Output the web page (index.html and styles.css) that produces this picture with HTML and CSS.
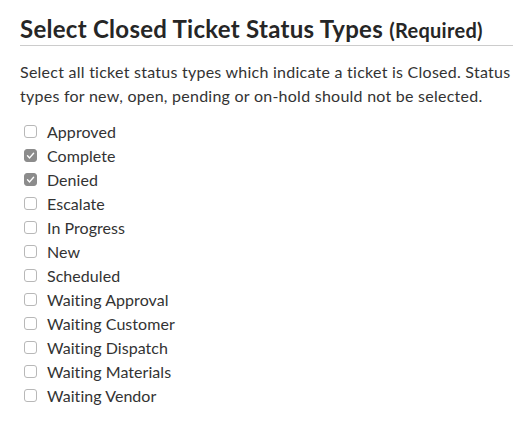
FILE: index.html
```html
<!DOCTYPE html>
<html>
<head>
<meta charset="utf-8">
<link rel="stylesheet" href="styles.css">
</head>
<body>
<div class="panel">
  <h2 class="title">Select Closed Ticket Status Types <span class="req">(Required)</span></h2>
  <p class="desc">Select all ticket status types which indicate a ticket is Closed. Status types for new, open, pending or on-hold should not be selected.</p>
  <ul class="list">
    <li class="item"><span class="box"></span>Approved</li>
    <li class="item"><span class="box checked"><svg viewBox="0 0 13 13" width="13" height="13"><path d="M3.5 6.8 L5.6 8.9 L9.6 4.2" fill="none" stroke="#fff" stroke-width="1.4" stroke-linecap="round" stroke-linejoin="round"/></svg></span>Complete</li>
    <li class="item"><span class="box checked"><svg viewBox="0 0 13 13" width="13" height="13"><path d="M3.5 6.8 L5.6 8.9 L9.6 4.2" fill="none" stroke="#fff" stroke-width="1.4" stroke-linecap="round" stroke-linejoin="round"/></svg></span>Denied</li>
    <li class="item"><span class="box"></span>Escalate</li>
    <li class="item"><span class="box"></span>In Progress</li>
    <li class="item"><span class="box"></span>New</li>
    <li class="item"><span class="box"></span>Scheduled</li>
    <li class="item"><span class="box"></span>Waiting Approval</li>
    <li class="item"><span class="box"></span>Waiting Customer</li>
    <li class="item"><span class="box"></span>Waiting Dispatch</li>
    <li class="item"><span class="box"></span>Waiting Materials</li>
    <li class="item"><span class="box"></span>Waiting Vendor</li>
  </ul>
</div>
</body>
</html>
```
FILE: styles.css
```css
html, body {
  margin: 0;
  padding: 0;
  background: #fff;
}
body {
  font-family: Lato, "Open Sans", sans-serif;
  color: #333;
}
.panel {
  padding: 14px 0 0 20px;
}
.title {
  margin: 0;
  font-size: 24px;
  font-weight: 700;
  color: #262626;
  line-height: 30px;
  letter-spacing: 0.27px;
  border-bottom: 1px solid #ccc;
}
.req {
  font-size: 20px;
  letter-spacing: 0.3px;
}
.desc {
  margin: 14px 0 0;
  font-size: 16px;
  line-height: 24px;
  letter-spacing: 0.25px;
  padding-right: 0;
}
.list {
  list-style: none;
  margin: 11px 0 0;
  padding: 0;
}
.item {
  display: flex;
  align-items: center;
  height: 24px;
  font-size: 16px;
  letter-spacing: 0.05px;
}
.box {
  width: 11px;
  height: 11px;
  border: 1px solid #b8b8b8;
  border-radius: 3px;
  margin: 0 10px 0 4px;
  display: flex;
  align-items: center;
  justify-content: center;
  box-sizing: content-box;
}
.box.checked {
  background: #8c8c8c;
  border-color: #8c8c8c;
}
.box svg {
  display: block;
  flex: none;
}
```
